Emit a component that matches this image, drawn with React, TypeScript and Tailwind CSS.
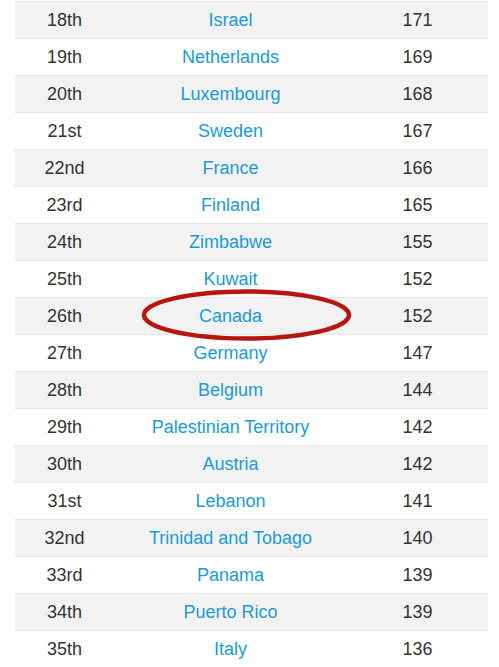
const rows: [string, string, number][] = [
  ["18th", "Israel", 171],
  ["19th", "Netherlands", 169],
  ["20th", "Luxembourg", 168],
  ["21st", "Sweden", 167],
  ["22nd", "France", 166],
  ["23rd", "Finland", 165],
  ["24th", "Zimbabwe", 155],
  ["25th", "Kuwait", 152],
  ["26th", "Canada", 152],
  ["27th", "Germany", 147],
  ["28th", "Belgium", 144],
  ["29th", "Palestinian Territory", 142],
  ["30th", "Austria", 142],
  ["31st", "Lebanon", 141],
  ["32nd", "Trinidad and Tobago", 140],
  ["33rd", "Panama", 139],
  ["34th", "Puerto Rico", 139],
  ["35th", "Italy", 136],
];

const App = () => {
  return (
    <div className="h-[667px] w-[499px] overflow-hidden bg-white pt-px font-['Liberation_Sans',Arial,sans-serif] text-[18px] text-[#333]">
      <div className="relative ml-[15px] w-[473px]">
        {rows.map(([rank, country, score], i) => (
          <div
            key={rank}
            className={`grid h-[37px] grid-cols-[99px_233px_141px] items-center border-t border-[#e6e6e6] ${
              i % 2 === 0 ? "bg-[#f2f2f2]" : "bg-white"
            }`}
          >
            <span className="text-center">{rank}</span>
            <a className="text-center text-[#1a9bd5]">{country}</a>
            <span className="text-center">{score}</span>
          </div>
        ))}
        {/* red ring around Canada */}
        <svg
          className="pointer-events-none absolute left-[126px] top-[287px]"
          width="212"
          height="54"
          viewBox="0 0 212 54"
        >
          <ellipse
            cx="105.5"
            cy="27"
            rx="102.5"
            ry="23.5"
            fill="none"
            stroke="#b5170e"
            strokeWidth="4.5"
          />
        </svg>
      </div>
    </div>
  );
};

export default App;
